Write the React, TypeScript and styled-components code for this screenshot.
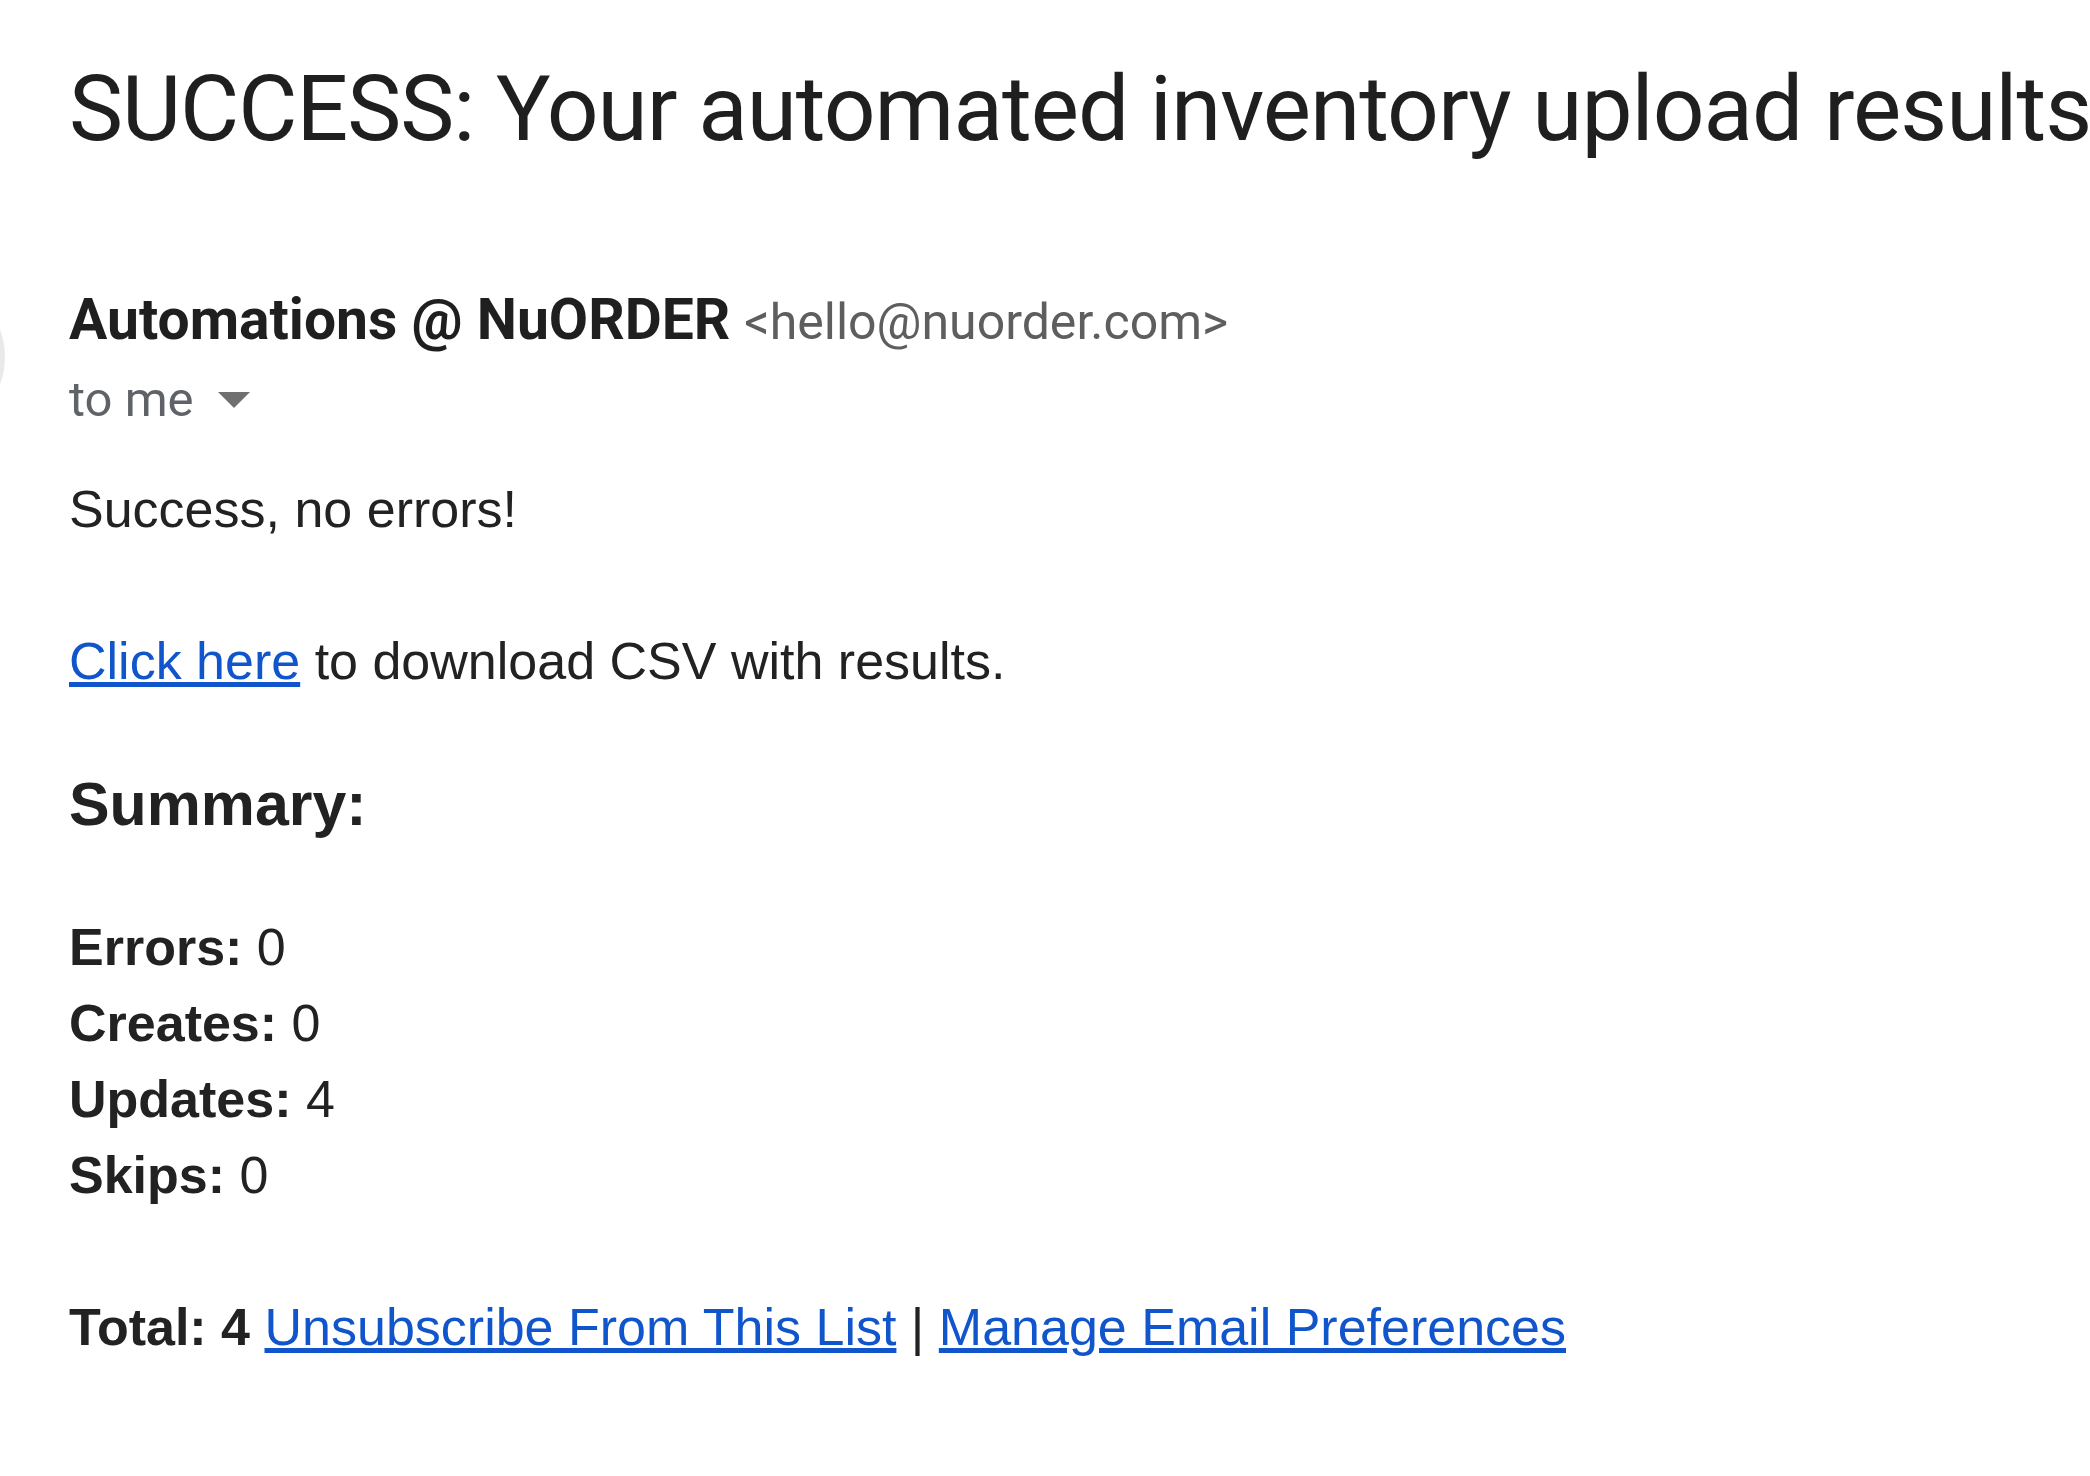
import React from "react";
import styled, { createGlobalStyle } from "styled-components";

const Global = createGlobalStyle`
  html, body {
    margin: 0;
    padding: 0;
    background: #ffffff;
    overflow: hidden;
  }
  body {
    width: 2090px;
    height: 1476px;
  }
`;

const Page = styled.main`
  box-sizing: border-box;
  width: 2090px;
  height: 1476px;
  padding: 64px 0 0 69px;
  overflow: hidden;
`;

const Subject = styled.h1`
  margin: 0;
  font-family: Roboto, "Open Sans", sans-serif;
  font-weight: 400;
  font-size: 91px;
  line-height: 91px;
  letter-spacing: -1px;
  color: #1f1f1f;
  white-space: nowrap;
`;

const Header = styled.section`
  display: flex;
  align-items: flex-start;
  gap: 64px;
  margin: 124px 0 0 -220px;
`;

const Avatar = styled.div`
  flex: none;
  width: 156px;
  height: 156px;
  border-radius: 50%;
  background: #e9e9e9;
`;

const SenderInfo = styled.div`
  display: flex;
  flex-direction: column;
  padding-top: 11px;
  font-family: Roboto, "Open Sans", sans-serif;
`;

const SenderLine = styled.div`
  display: flex;
  align-items: baseline;
  gap: 14px;
  height: 60px;
  line-height: 60px;
  white-space: nowrap;
`;

const SenderName = styled.span`
  font-size: 57px;
  font-weight: 700;
  color: #1f1f1f;
`;

const SenderEmail = styled.span`
  font-size: 50px;
  font-weight: 400;
  color: #5e5e5e;
`;

const Recipient = styled.div`
  display: flex;
  align-items: center;
  gap: 24px;
  margin-top: 20px;
  height: 60px;
  line-height: 60px;
  font-size: 49px;
  color: #5f6368;
`;

const Caret = styled.svg`
  width: 32px;
  height: 16px;
`;

const Body = styled.article`
  display: flex;
  flex-direction: column;
  margin-top: 36px;
  font-family: "Liberation Sans", Arial, sans-serif;
  font-size: 52px;
  color: #222222;
`;

const Line = styled.div<{ $gap?: number }>`
  height: 76px;
  line-height: 76px;
  margin-top: ${(p) => p.$gap ?? 0}px;
  white-space: nowrap;
`;

const Heading = styled.h3<{ $gap?: number }>`
  margin: ${(p) => p.$gap ?? 0}px 0 0;
  height: 76px;
  line-height: 76px;
  font-size: 1.17em;
  font-weight: 700;
`;

const Label = styled.b`
  font-weight: 700;
`;

const Link = styled.a`
  color: #1155cc;
  text-decoration: underline;
  cursor: pointer;
`;

const stats = [
  { label: "Errors", value: 0 },
  { label: "Creates", value: 0 },
  { label: "Updates", value: 4 },
  { label: "Skips", value: 0 },
];

export default function App() {
  return (
    <>
      <Global />
      <Page>
        <Subject>SUCCESS: Your automated inventory upload results</Subject>
        <Header>
          <Avatar />
          <SenderInfo>
            <SenderLine>
              <SenderName>Automations @ NuORDER</SenderName>
              <SenderEmail>&lt;hello@nuorder.com&gt;</SenderEmail>
            </SenderLine>
            <Recipient>
              <span>to me</span>
              <Caret viewBox="0 0 32 16">
                <path d="M0 0 L32 0 L16 16 Z" fill="#707070" />
              </Caret>
            </Recipient>
          </SenderInfo>
        </Header>
        <Body>
          <Line>Success, no errors!</Line>
          <Line $gap={76}>
            <Link>Click here</Link> to download CSV with results.
          </Line>
          <Heading $gap={67}>Summary:</Heading>
          {stats.map((s, i) => (
            <Line key={s.label} $gap={i === 0 ? 67 : 0}>
              <Label>{s.label}:</Label> {s.value}
            </Line>
          ))}
          <Line $gap={76}>
            <Label>Total: 4</Label> <Link>Unsubscribe From This List</Link> |{" "}
            <Link>Manage Email Preferences</Link>
          </Line>
        </Body>
      </Page>
    </>
  );
}
